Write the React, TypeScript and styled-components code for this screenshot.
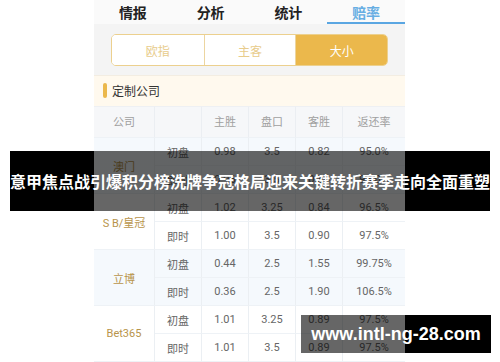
import styled, { createGlobalStyle } from 'styled-components';

const GlobalStyle = createGlobalStyle`
    html, body {
        margin: 0;
        padding: 0;
        background: #fff;
        font-family: Roboto, "Noto Sans CJK SC", sans-serif;
    }
`

const tabs = ["情报", "分析", "统计", "赔率"];
const segments = ["欧指", "主客", "大小"];

const companies = [
    { name: "澳门", tint: true, rows: [["初盘", "0.98", "3.5", "0.82", "95.0%"], ["即时", "0.96", "3.5", "0.84", "95.0%"]] },
    { name: "S B/皇冠", tint: false, rows: [["初盘", "1.02", "3.25", "0.84", "96.5%"], ["即时", "1.00", "3.5", "0.90", "97.5%"]] },
    { name: "立博", tint: true, rows: [["初盘", "0.44", "2.5", "1.55", "99.75%"], ["即时", "0.36", "2.5", "1.90", "106.5%"]] },
    { name: "Bet365", tint: false, rows: [["初盘", "1.01", "3.25", "0.89", "97.5%"], ["即时", "1.01", "3.5", "0.89", "97.5%"]] },
];

export default function App() {
    return (
        <>
            <GlobalStyle />
            <Page>
                <Phone>
                    <TabBar>
                        {tabs.map((t, i) => (
                            <Tab key={t} active={i === 3}>{t}</Tab>
                        ))}
                    </TabBar>
                    <SegmentArea>
                        <Segmented>
                            {segments.map((s, i) => (
                                <Segment key={s} active={i === 2}>{s}</Segment>
                            ))}
                        </Segmented>
                    </SegmentArea>
                    <SectionHead>
                        <GoldBar />
                        定制公司
                    </SectionHead>
                    <Table>
                        <HeadCell>公司</HeadCell>
                        <HeadCell></HeadCell>
                        <HeadCell>主胜</HeadCell>
                        <HeadCell>盘口</HeadCell>
                        <HeadCell>客胜</HeadCell>
                        <HeadCell last>返还率</HeadCell>
                        {companies.map((c) => (
                            <Block key={c.name} tint={c.tint}>
                                <Company>{c.name}</Company>
                                {c.rows.map((r, ri) => r.map((v, vi) => (
                                    <Cell key={ri + "-" + vi} last={vi === 4}>{v}</Cell>
                                )))}
                            </Block>
                        ))}
                    </Table>
                </Phone>
                <Banner>意甲焦点战引爆积分榜洗牌争冠格局迎来关键转折赛季走向全面重塑</Banner>
                <Watermark>www.intl-ng-28.com</Watermark>
            </Page>
        </>
    )
}

const Page = styled.div`
    position: relative;
    width: 500px;
    height: 362px;
    overflow: hidden;
    background: #fff;
    display: flex;
    justify-content: center;
`

const Phone = styled.div`
    width: 311px;
    margin-left: -1px;
    background: #f5f5f5;
    display: flex;
    flex-direction: column;
`

const TabBar = styled.div`
    display: grid;
    grid-template-columns: repeat(4, 1fr);
    height: 26px;
    background: #fafafa;
`

const Tab = styled.div<{ active?: boolean }>`
    display: flex;
    align-items: center;
    justify-content: center;
    font-size: 14px;
    font-weight: bold;
    color: ${(p) => (p.active ? "#67aee3" : "#222")};
    border-bottom: 2px solid ${(p) => (p.active ? "#5aa6e2" : "transparent")};
    box-sizing: border-box;
    padding-top: 1px;
`

const SegmentArea = styled.div`
    height: 53px;
    padding: 10px 0 0 17px;
    box-sizing: border-box;
    background: #f4f4f4;
`

const Segmented = styled.div`
    width: 277px;
    height: 32px;
    box-sizing: border-box;
    display: grid;
    grid-template-columns: repeat(3, 1fr);
    border: 1px solid #ecd08e;
    border-radius: 5px;
    overflow: hidden;
    background: #fff;
`

const Segment = styled.div<{ active?: boolean }>`
    display: flex;
    align-items: center;
    justify-content: center;
    font-size: 12px;
    color: ${(p) => (p.active ? "#fff" : "#e8cc8c")};
    background: ${(p) => (p.active ? "#ebb84c" : "#fff")};
    border-left: 1px solid #ecd5a0;
    &:first-child {
        border-left: none;
    }
`

const SectionHead = styled.div`
    height: 33px;
    display: flex;
    align-items: center;
    gap: 5px;
    padding-left: 9px;
    background: #fff9ee;
    font-size: 12px;
    color: #333;
    border-top: 1px solid #f3ede2;
    box-sizing: border-box;
`

const GoldBar = styled.span`
    width: 4px;
    height: 15px;
    border-radius: 2px;
    background: #ebb84c;
`

const Table = styled.div`
    display: grid;
    grid-template-columns: 61px 47px 47px 47px 47px 1fr;
    grid-template-rows: 32px;
    grid-auto-rows: 28px;
    background: #fff;
`

const HeadCell = styled.div<{ last?: boolean }>`
    display: flex;
    align-items: center;
    justify-content: center;
    padding-bottom: 3px;
    font-size: 11px;
    color: #a0a0a0;
    background: #f6f7f9;
    border-right: ${(p) => (p.last ? "none" : "1px solid #ebeef2")};
    border-top: 1px solid #eef0f3;
    border-bottom: 1px solid #eef2f6;
`

const Block = styled.div<{ tint?: boolean }>`
    grid-column: 1 / -1;
    grid-row: span 2;
    display: grid;
    grid-template-columns: subgrid;
    grid-template-rows: 28px 28px;
    background: ${(p) => (p.tint ? "#f5f9fd" : "#fff")};
`

const Company = styled.div`
    grid-row: 1 / 3;
    grid-column: 1;
    display: flex;
    align-items: center;
    justify-content: center;
    font-size: 11px;
    color: #b8944a;
    border-right: 1px solid #ebeff3;
    border-bottom: 1px solid #eef2f6;
`

const Cell = styled.div<{ last?: boolean }>`
    display: flex;
    align-items: center;
    justify-content: center;
    font-size: 11px;
    color: #666;
    border-right: ${(p) => (p.last ? "none" : "1px solid #ebeff3")};
    border-bottom: 1px solid #eef2f6;
`

const Banner = styled.div`
    position: absolute;
    left: 10px;
    top: 151px;
    width: 480px;
    height: 60px;
    display: flex;
    align-items: center;
    justify-content: center;
    background: linear-gradient(to right, #000 0, #000 84px, rgba(0, 0, 0, 0.6) 84px, rgba(0, 0, 0, 0.6) 395px, #000 395px);
    color: #fff;
    font-family: "Noto Sans CJK SC", sans-serif;
    font-weight: bold;
    font-size: 16px;
    white-space: nowrap;
`

const Watermark = styled.div`
    position: absolute;
    left: 301px;
    top: 315px;
    width: 190px;
    height: 38px;
    display: flex;
    align-items: center;
    justify-content: center;
    background: linear-gradient(to right, rgba(0, 0, 0, 0.6) 0, rgba(0, 0, 0, 0.6) 104px, #000 104px);
    color: #fff;
    font-family: "Liberation Sans", Arial, sans-serif;
    font-weight: bold;
    font-size: 18px;
`
